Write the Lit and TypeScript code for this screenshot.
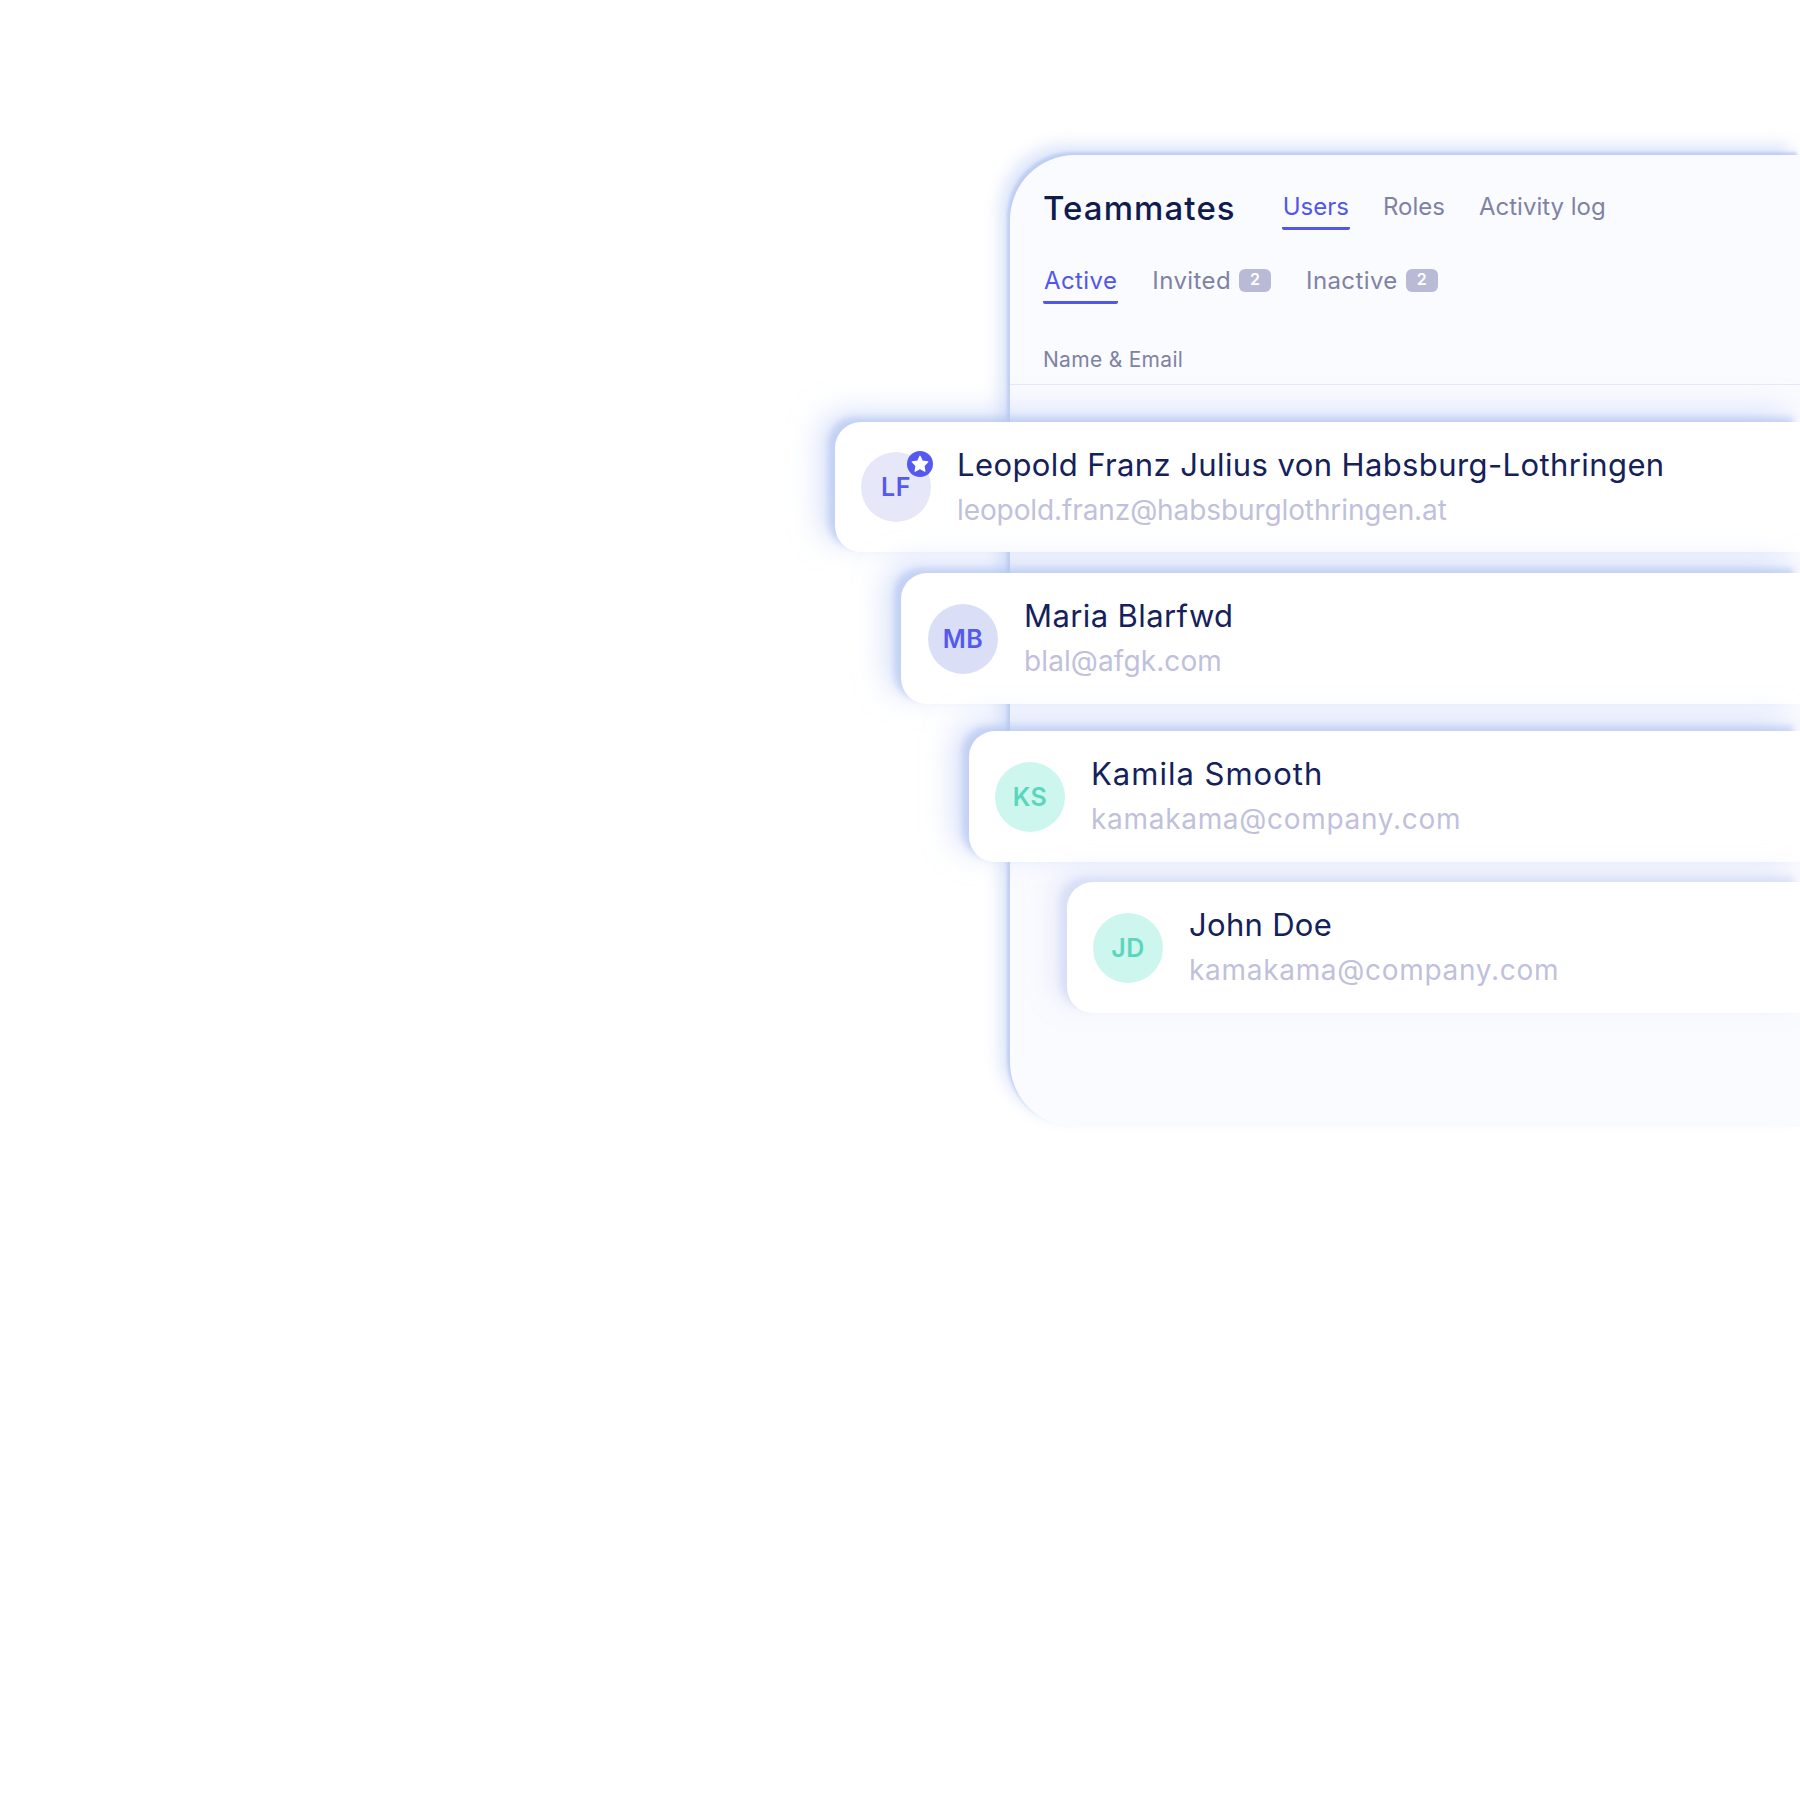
import { LitElement, html, css, nothing } from 'lit';
import { customElement } from 'lit/decorators.js';

interface Member {
  cls: string;
  initials: string;
  name: string;
  email: string;
  tone: string;
  nameTrack: number;
  mailTrack: number;
  star?: boolean;
}

// tracking per row keeps the line widths close to the reference
const members: Member[] = [
  { cls: 'r1', initials: 'LF', name: 'Leopold Franz Julius von Habsburg-Lothringen', email: 'leopold.franz@habsburglothringen.at', tone: 'soft', nameTrack: 0.4, mailTrack: -0.1, star: true },
  { cls: 'r2', initials: 'MB', name: 'Maria Blarfwd', email: 'blal@afgk.com', tone: 'blue', nameTrack: 0.4, mailTrack: 0.1 },
  { cls: 'r3', initials: 'KS', name: 'Kamila Smooth', email: 'kamakama@company.com', tone: 'mint', nameTrack: 1, mailTrack: 0.7 },
  { cls: 'r4', initials: 'JD', name: 'John Doe', email: 'kamakama@company.com', tone: 'mint', nameTrack: 0.3, mailTrack: 0.7 },
];

@customElement('app-root')
export class AppRoot extends LitElement {
  static styles = css`
    :host {
      display: block;
      width: 1800px;
      height: 1800px;
      overflow: hidden;
      background: #fff;
      font-family: Inter, 'Open Sans', sans-serif;
    }
    .panel {
      box-sizing: border-box;
      width: 790px;
      height: 972px;
      margin: 155px 0 0 1010px;
      padding-top: 32px;
      background: #fafbff;
      border-radius: 65px 0 0 65px;
      box-shadow: -3px -3px 3px rgba(170, 190, 240, 0.6), -10px -10px 16px rgba(200, 213, 246, 0.65);
    }
    .head {
      display: flex;
      align-items: flex-start;
      padding-left: 33px;
    }
    h1 {
      margin: 0 46px 0 0;
      font-size: 33px;
      line-height: 42px;
      font-weight: 500;
      letter-spacing: 1.1px;
      color: #101c4e;
    }
    .tabs {
      display: flex;
      gap: 32px;
    }
    .subtabs {
      gap: 33px;
      padding: 31px 0 0 33px;
    }
    .subtabs .tab {
      letter-spacing: 0.4px;
    }
    .tab {
      display: flex;
      align-items: center;
      gap: 8px;
      height: 38px;
      padding: 0 1px 2px;
      border-bottom: 3px solid transparent;
      border-radius: 0 0 2px 2px;
      font-size: 24px;
      letter-spacing: 0;
      color: #7f82a4;
    }
    .tab.on {
      color: #5057ea;
      border-bottom-color: #5057ea;
    }
    .count {
      width: 32px;
      height: 23px;
      border-radius: 6px;
      background: #b8bad6;
      color: #fff;
      font-size: 16px;
      font-weight: 600;
      line-height: 21px;
      text-align: center;
      letter-spacing: 0;
    }
    .col {
      margin-top: 43px;
      padding: 0 0 11px 33px;
      border-bottom: 1px solid #e6e8f8;
      font-size: 21px;
      line-height: 26px;
      letter-spacing: 0.3px;
      color: #7f82a4;
    }
    .rows {
      padding-top: 37px;
    }
    .row {
      box-sizing: border-box;
      display: flex;
      align-items: center;
      gap: 26px;
      height: 131px;
      padding-left: 26px;
      background: #fff;
      border-radius: 26px 0 0 26px;
      box-shadow: -7px -5px 6px rgba(178, 196, 240, 0.62), -16px -10px 30px rgba(185, 202, 245, 0.55);
    }
    .r1 { margin-left: -175px; height: 130px; }
    .r2 { margin: 21px 0 0 -109px; padding-left: 27px; }
    .r3 { margin: 27px 0 0 -41px; }
    .r4 {
      margin: 20px 0 0 57px;
      box-shadow: -7px -5px 6px rgba(208, 214, 244, 0.62), -14px -10px 24px rgba(212, 218, 246, 0.5);
    }
    .avatar {
      position: relative;
      flex: none;
      display: flex;
      align-items: center;
      justify-content: center;
      width: 70px;
      height: 70px;
      border-radius: 50%;
      font-size: 25px;
      font-weight: 600;
      letter-spacing: 0.5px;
    }
    .soft { background: #e6e7f8; color: #5559ef; }
    .blue { background: #dadff7; color: #5559ef; }
    .mint { background: #cdf6ef; color: #5bd6bd; }
    .star {
      position: absolute;
      left: 46px;
      top: -1px;
      width: 26px;
      height: 26px;
    }
    .name {
      font-size: 31px;
      line-height: 45px;
      color: #14215a;
      white-space: nowrap;
    }
    .email {
      font-size: 28px;
      line-height: 46px;
      color: #bfc1dc;
      white-space: nowrap;
    }
  `;

  renderStar() {
    return html`<svg class="star" viewBox="0 0 26 26">
      <circle cx="13" cy="13" r="13" fill="#5559ef"></circle>
      <path d="M13 5.2l2.4 5 5.4.7-3.9 3.8 1 5.4-4.9-2.6-4.9 2.6 1-5.4-3.9-3.8 5.4-.7z" fill="#fff" stroke="#fff" stroke-width="1.2" stroke-linejoin="round"></path>
    </svg>`;
  }

  render() {
    return html`
      <section class="panel">
        <div class="head">
          <h1>Teammates</h1>
          <nav class="tabs">
            <span class="tab on">Users</span>
            <span class="tab">Roles</span>
            <span class="tab">Activity log</span>
          </nav>
        </div>
        <nav class="tabs subtabs">
          <span class="tab on">Active</span>
          <span class="tab">Invited <span class="count">2</span></span>
          <span class="tab">Inactive <span class="count">2</span></span>
        </nav>
        <div class="col">Name &amp; Email</div>
        <div class="rows">
          ${members.map(
            (m) => html`
              <div class="row ${m.cls}">
                <div class="avatar ${m.tone}">${m.initials}${m.star ? this.renderStar() : nothing}</div>
                <div>
                  <div class="name" style="letter-spacing:${m.nameTrack}px">${m.name}</div>
                  <div class="email" style="letter-spacing:${m.mailTrack}px">${m.email}</div>
                </div>
              </div>
            `
          )}
        </div>
      </section>
    `;
  }
}
